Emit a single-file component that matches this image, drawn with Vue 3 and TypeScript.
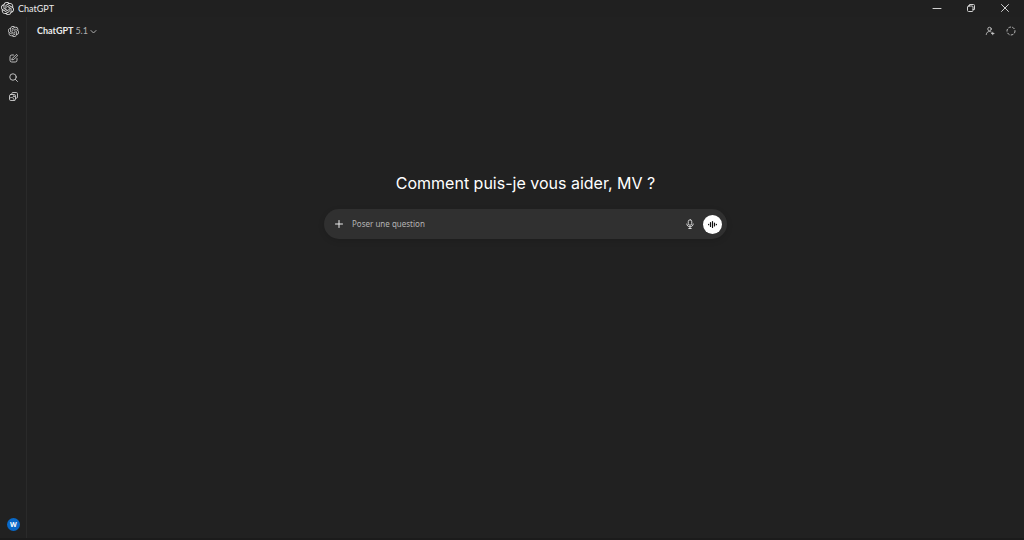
<script setup lang="ts">
import { ref } from 'vue'

const question = ref('')
const logo =
  'M22.2819 9.8211a5.9847 5.9847 0 0 0-.5157-4.9108 6.0462 6.0462 0 0 0-6.5098-2.9A6.0651 6.0651 0 0 0 4.9807 4.1818a5.9847 5.9847 0 0 0-3.9977 2.9 6.0462 6.0462 0 0 0 .7427 7.0966 5.98 5.98 0 0 0 .511 4.9107 6.051 6.051 0 0 0 6.5146 2.9001A5.9847 5.9847 0 0 0 13.2599 24a6.0557 6.0557 0 0 0 5.7718-4.2058 5.9894 5.9894 0 0 0 3.9977-2.9001 6.0557 6.0557 0 0 0-.7475-7.0729zm-9.022 12.6081a4.4755 4.4755 0 0 1-2.8764-1.0408l.1419-.0804 4.7783-2.7582a.7948.7948 0 0 0 .3927-.6813v-6.7369l2.02 1.1686a.071.071 0 0 1 .038.052v5.5826a4.504 4.504 0 0 1-4.4945 4.4944zm-9.6607-4.1254a4.4708 4.4708 0 0 1-.5346-3.0137l.142.0852 4.783 2.7582a.7712.7712 0 0 0 .7806 0l5.8428-3.3685v2.3324a.0804.0804 0 0 1-.0332.0615L9.74 19.9502a4.4992 4.4992 0 0 1-6.1408-1.6464zM2.3408 7.8956a4.485 4.485 0 0 1 2.3655-1.9728V11.6a.7664.7664 0 0 0 .3879.6765l5.8144 3.3543-2.0201 1.1685a.0757.0757 0 0 1-.071 0l-4.8303-2.7865A4.504 4.504 0 0 1 2.3408 7.872zm16.5963 3.8558L13.1038 8.364 15.1192 7.2a.0757.0757 0 0 1 .071 0l4.8303 2.7913a4.4944 4.4944 0 0 1-.6765 8.1042v-5.6772a.79.79 0 0 0-.407-.667zm2.0107-3.0231l-.142-.0852-4.7735-2.7818a.7759.7759 0 0 0-.7854 0L9.409 9.2297V6.8974a.0662.0662 0 0 1 .0284-.0615l4.8303-2.7866a4.4992 4.4992 0 0 1 6.6802 4.66zM8.3065 12.863l-2.02-1.1638a.0804.0804 0 0 1-.038-.0567V6.0742a4.4992 4.4992 0 0 1 7.3757-3.4537l-.142.0805L8.704 5.459a.7948.7948 0 0 0-.3927.6813zm1.0976-2.3654l2.602-1.4998 2.6069 1.4998v2.9994l-2.5974 1.4997-2.6067-1.4997Z'
</script>

<template>
  <div class="window">
    <header class="titlebar">
      <svg class="app-logo" viewBox="0 0 24 24" aria-hidden="true"><path :d="logo" /></svg>
      <span class="app-name">ChatGPT</span>
      <div class="window-controls">
        <button type="button" aria-label="Réduire">
          <svg viewBox="0 0 10 10"><path d="M1 5.500h8" /></svg>
        </button>
        <button type="button" aria-label="Restaurer">
          <svg viewBox="0 0 10 10"><rect x="1.500" y="3" width="5.500" height="5.500" rx="1" /><path d="M3.500 3V1.500h4a1 1 0 0 1 1 1v4H7" /></svg>
        </button>
        <button type="button" aria-label="Fermer">
          <svg viewBox="0 0 10 10"><path d="M1.500 1.500l7 7M8.500 1.500l-7 7" /></svg>
        </button>
      </div>
    </header>

    <div class="body">
      <nav class="rail" aria-label="Navigation">
        <a class="home" href="#" aria-label="Accueil">
          <svg class="filled" viewBox="0 0 24 24"><path :d="logo" /></svg>
        </a>
        <button type="button" aria-label="Nouveau chat">
          <svg viewBox="1 1 18 18"><path d="M10 3H6.500a3.500 3.500 0 0 0-3.500 3.500v7A3.500 3.500 0 0 0 6.500 17h7a3.500 3.500 0 0 0 3.500-3.500V10M8 9.500l6.800-6.800a1.700 1.700 0 0 1 2.500 2.500L10.500 12l-3.200.7z" /></svg>
        </button>
        <button type="button" aria-label="Rechercher">
          <svg viewBox="1 1 18 18"><circle cx="9" cy="9" r="6.500" /><path d="M14 14l4 4" /></svg>
        </button>
        <button type="button" aria-label="Bibliothèque">
          <svg viewBox="1 1 18 18"><path d="M6.500 6V4.500a2.500 2.500 0 0 1 2.500-2.500h6.500A2.500 2.500 0 0 1 18 4.500V11a2.500 2.500 0 0 1-2.500 2.500H14" /><rect x="2" y="6" width="12" height="12" rx="2.500" /><path d="M2.500 13c5-3 8 0 9 4.500" /><circle cx="10.500" cy="9.500" r="1" /></svg>
        </button>
        <button class="avatar" type="button" aria-label="Compte W">W</button>
      </nav>

      <main class="main">
        <div class="toolbar">
          <button class="model" type="button">
            <span class="name">ChatGPT</span><span class="version">5.1</span>
            <svg viewBox="0 0 7 7"><path d="M1 2.500l2.500 2.500L6 2.500" /></svg>
          </button>
          <div class="tools">
            <button type="button" aria-label="Démarrer un chat de groupe">
              <svg viewBox="0 0 20 20"><circle cx="9" cy="6" r="3.500" /><path d="M2.500 17c.5-4 3-6 6.500-6 1.500 0 2.700.4 3.700 1.100M15.500 12.500v5M13 15h5" /></svg>
            </button>
            <button type="button" aria-label="Chat temporaire">
              <svg viewBox="0 0 20 20"><circle class="dashed" cx="10" cy="10" r="8" /></svg>
            </button>
          </div>
        </div>

        <section class="welcome">
          <h1>Comment puis-je vous aider, MV ?</h1>
          <form class="composer" @submit.prevent>
            <button type="button" aria-label="Ajouter">
              <svg viewBox="0 0 10 10"><path d="M5 1.500v7M1.500 5h7" /></svg>
            </button>
            <input v-model="question" type="text" placeholder="Poser une question" aria-label="Poser une question" />
            <button type="button" aria-label="Dicter">
              <svg viewBox="0 0 20 20"><rect x="6.500" y="1.500" width="7" height="11" rx="3.500" /><path d="M3.500 10c.5 3.700 3 5.500 6.500 5.500s6-1.800 6.500-5.500M10 15.500v3.500M7.500 19h5" /></svg>
            </button>
            <button class="voice" type="button" aria-label="Mode vocal">
              <svg viewBox="0 0 9 9"><path d="M.6 4.300v.4M2.500 2.500v4M4.500 1.500v6M6.500 3v3M8.400 4.300v.4" /></svg>
            </button>
          </form>
        </section>
      </main>
    </div>
  </div>
</template>

<style>
body {
  margin: 0;
  background: #212121;
}
</style>

<style scoped>
.window {
  display: flex;
  flex-direction: column;
  min-height: 100vh;
  box-sizing: border-box;
  border-bottom: 2px solid #1b1b1b;
  background: #212121;
  color: #ececec;
  font-family: "Noto Sans", "Open Sans", sans-serif;
  font-size: 9px;
  line-height: 12px;
}
button {
  display: flex;
  align-items: center;
  justify-content: center;
  padding: 0;
  border: 0;
  background: none;
  color: inherit;
  font: inherit;
}
svg {
  display: block;
  width: 10px;
  height: 10px;
  fill: none;
  stroke: currentColor;
  stroke-width: 1.7;
  stroke-linecap: round;
  stroke-linejoin: round;
}
.titlebar {
  display: flex;
  align-items: center;
  gap: 4px;
  height: 17px;
  padding-left: 1px;
  background: #202020;
}
.app-logo,
.filled {
  fill: currentColor;
  stroke: none;
}
.app-logo {
  width: 13px;
  height: 13px;
}
.app-name,
.name,
.version {
  font-family: Lato, "Open Sans", sans-serif;
}
.window-controls {
  display: flex;
  align-self: flex-start;
  margin-left: auto;
  padding-right: 2px;
}
.window-controls button {
  width: 34px;
  height: 16px;
  color: #d0d0d0;
}
.window-controls svg {
  stroke-width: 1;
}
.body {
  display: flex;
  flex: 1;
}
.rail {
  display: flex;
  flex-direction: column;
  align-items: center;
  width: 25px;
  padding: 0 0 7px 1px;
  border-right: 1px solid #2a2a2a;
  color: #d8d8d8;
}
.rail button {
  width: 19px;
  height: 19px;
}
.rail button svg {
  width: 9px;
  height: 9px;
}
.home {
  margin: 9px 0 12px;
  color: inherit;
}
.home svg {
  width: 11px;
  height: 11px;
}
.rail .avatar {
  width: 13px;
  height: 13px;
  margin-top: auto;
  border-radius: 50%;
  background: #0969c8;
  color: #fff;
  font-size: 7px;
  font-weight: 700;
}
.main {
  display: flex;
  flex: 1;
  flex-direction: column;
}
.toolbar {
  display: flex;
  align-items: center;
  justify-content: space-between;
  height: 28px;
  padding: 0 8px 0 10px;
}
.model {
  gap: 2px;
}
.name {
  font-weight: 700;
}
.version {
  color: #afafaf;
}
.model svg {
  width: 7px;
  height: 7px;
  color: #afafaf;
  stroke-width: 1;
}
.tools {
  display: flex;
  gap: 11px;
  color: #d0d0d0;
}
.dashed {
  stroke-dasharray: 4 4;
}
.welcome {
  display: flex;
  flex-direction: column;
  align-items: center;
  gap: 14px;
  padding: 127px 24px 24px;
}
h1 {
  margin: 0;
  color: #fff;
  font-family: Inter, "Open Sans", sans-serif;
  font-size: 16px;
  font-weight: 400;
  line-height: 23px;
}
.composer {
  display: flex;
  align-items: center;
  gap: 8px;
  width: 100%;
  max-width: 403px;
  height: 30px;
  box-sizing: border-box;
  padding: 0 5px 0 10px;
  border-radius: 15px;
  background: #303030;
  box-shadow: 0 2px 6px rgb(0 0 0 / 12%);
}
.composer > button:first-child svg {
  stroke-width: 1;
}
input {
  flex: 1;
  min-width: 0;
  padding: 0;
  border: 0;
  outline: 0;
  background: none;
  color: inherit;
  font: inherit;
  font-size: 8px;
}
input::placeholder {
  color: #b4b4b4;
  opacity: 1;
}
.composer .voice {
  width: 19px;
  height: 19px;
  border-radius: 50%;
  background: #fff;
  color: #111;
}
.composer .voice svg {
  width: 9px;
  height: 9px;
  stroke-width: 1.2;
}
</style>
